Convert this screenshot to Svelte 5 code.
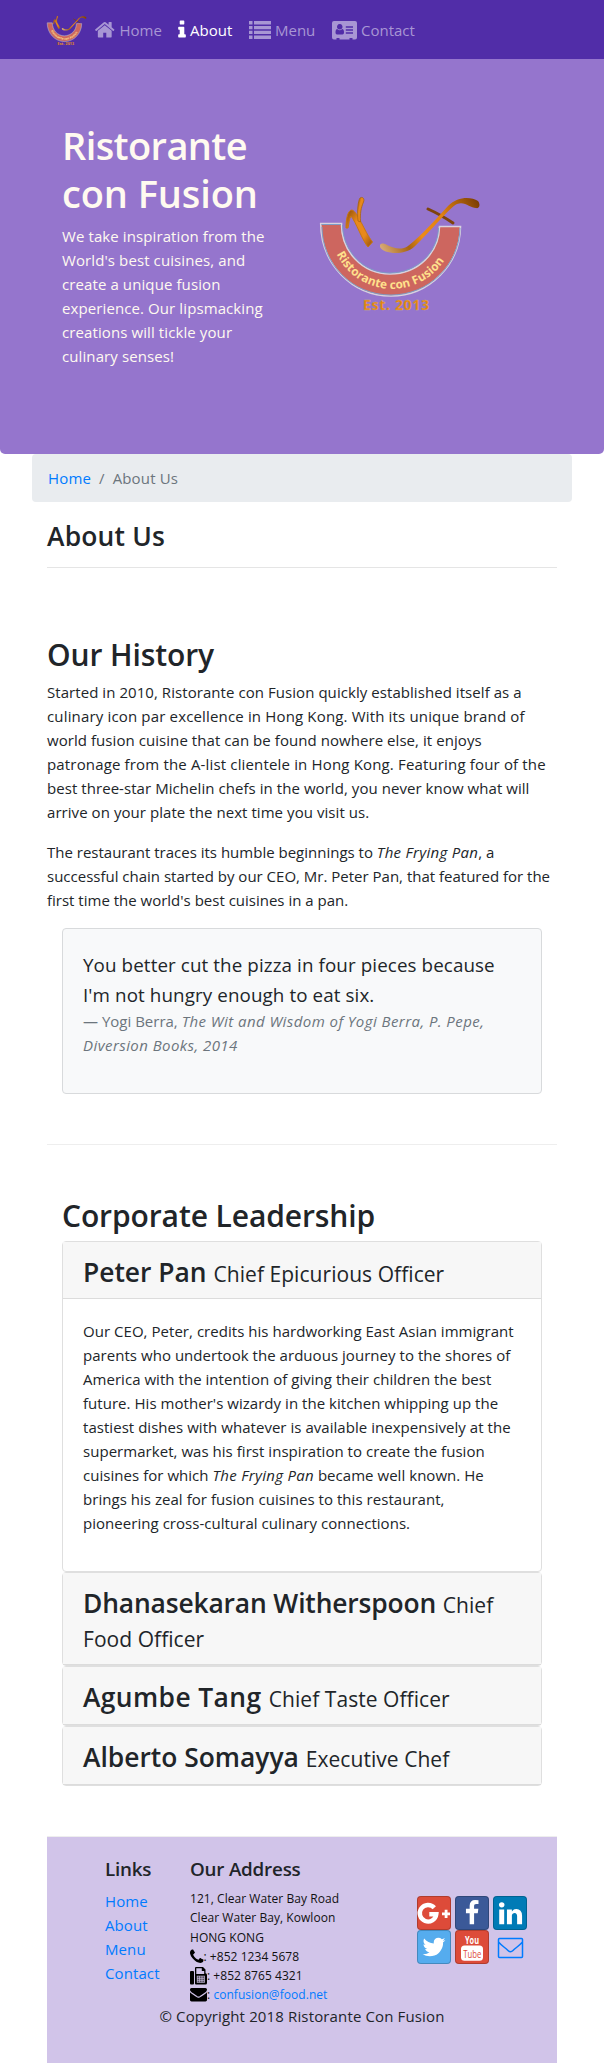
<script>
  const home = 'M1472 992v480q0 26-19 45t-45 19h-384v-384h-256v384h-384q-26 0-45-19t-19-45v-480q0-1 .5-3t.5-3l575-474 575 474q1 2 1 6zm223-69l-62 74q-8 9-21 11h-3q-13 0-21-7l-692-577-692 577q-12 8-24 7-13-2-21-11l-62-74q-8-10-7-23.5t11-21.5l719-599q32-26 76-26t76 26l244 204v-195q0-14 9-23t23-9h192q14 0 23 9t9 23v408l219 182q10 8 11 21.5t-7 23.5z';
  const info = 'M1216 1344v128q0 26-19 45t-45 19h-512q-26 0-45-19t-19-45v-128q0-26 19-45t45-19h64v-384h-64q-26 0-45-19t-19-45v-128q0-26 19-45t45-19h384q26 0 45 19t19 45v576h64q26 0 45 19t19 45zm-128-1152v192q0 26-19 45t-45 19h-256q-26 0-45-19t-19-45v-192q0-26 19-45t45-19h256q26 0 45 19t19 45z';
  const facebook = 'M1343 12v264h-157q-86 0-116 36t-30 108v189h293l-39 296h-254v759h-306v-759h-255v-296h255v-218q0-186 104-288.5t277-102.5q147 0 228 12z';
  const twitter = 'M1684 408q-67 98-162 167 1 14 1 42 0 130-38 259.5t-115.5 248.5-184.5 210.5-258 146-323 54.5q-271 0-496-145 35 4 78 4 225 0 401-138-105-2-188-64.5t-114-159.5q33 5 61 5 43 0 85-11-112-23-185.5-111.5t-73.5-205.5v-4q68 38 146 41-66-44-105-115t-39-154q0-88 44-163 121 149 294.5 238.5t371.5 99.5q-8-38-8-74 0-134 94.5-228.5t228.5-94.5q140 0 236 102 109-21 205-78-37 115-142 178 93-10 186-50z';
  const linkedin = 'M477 625v991h-330v-991h330zm21-306q1 73-50.5 122t-135.5 49h-2q-82 0-132-49t-50-122q0-74 51.5-122.5t134.5-48.5 133 48.5 51 122.5zm1166 729v568h-329v-530q0-105-40.5-164.5t-126.5-59.5q-63 0-105.5 34.5t-63.5 85.5q-11 30-11 81v553h-329q2-399 2-647t-1-296l-1-48h329v144h-2q20-32 41-56t56.5-52 87-43.5 114.5-15.5q171 0 275 113.5t104 332.5z';
  const phone = 'M1600 1240q0 27-10 70.5t-21 68.5q-21 50-122 106-94 51-186 51-27 0-53-3.5t-57.5-12.5-47-14.5-55.5-20.5-49-18q-98-35-175-83-127-79-264-216t-216-264q-48-77-83-175-3-9-18-49t-20.5-55.5-14.5-47-12.5-57.5-3.5-53q0-92 51-186 56-101 106-122 25-11 68.5-21t70.5-10q14 0 21 3 18 6 53 76 11 19 30 54t35 63.5 31 53.5q3 4 17.5 25t21.5 35.5 7 28.5q0 20-28.5 50t-62 55-62 53-28.5 46q0 9 5 22.5t8.5 20.5 14 24 11.5 19q76 137 174 235t235 174q2 1 19 11.5t24 14 20.5 8.5 22.5 5q18 0 46-28.5t53-62 55-62 50-28.5q14 0 28.5 7t35.5 21.5 25 17.5q25 15 53.5 31t63.5 35 54 30q70 35 76 53 3 7 3 21z';
  const mail = 'M1792 710v794q0 66-47 113t-113 47h-1472q-66 0-113-47t-47-113v-794q44 49 101 87 362 246 497 345 57 42 92.5 65.5t94.5 48 110 24.5h2q51 0 110-24.5t94.5-48 92.5-65.5q170-123 498-345 57-39 100-87zm0-294q0 79-49 151t-122 123q-376 261-468 325-10 7-42.5 31t-54 38.5-52 32.5-57.5 27-50 9h-2q-23 0-50-9t-57.5-27-52-32.5-54-38.5-42.5-31q-91-64-262-182.5t-205-142.5q-62-42-117-115.5t-55-136.5q0-78 41.5-130t118.5-52h1472q65 0 112.5 47t47.5 113z';
  const links = ['Home', 'About', 'Menu', 'Contact'];
</script>

{#snippet logo(id, w, h)}
  <svg width={w} height={h} viewBox="0 0 162 120" preserveAspectRatio="none">
    <defs>
      <linearGradient id="{id}-gold" x1="0" y1="0" x2="1" y2="1">
        <stop offset="0" stop-color="#8a4a08" /><stop offset=".35" stop-color="#e8891c" />
        <stop offset=".7" stop-color="#e8891c" /><stop offset="1" stop-color="#8f4c0c" />
      </linearGradient>
      <linearGradient id="{id}-tail" gradientUnits="userSpaceOnUse" x1="60" y1="55" x2="159" y2="5">
        <stop offset="0" stop-color="#dcb183" /><stop offset=".25" stop-color="#a8640f" />
        <stop offset=".4" stop-color="#ed8b16" /><stop offset=".65" stop-color="#e08112" />
        <stop offset=".85" stop-color="#a65c0a" /><stop offset="1" stop-color="#7b3d02" />
      </linearGradient>
      <path id="{id}-arc" d="M16.500 57A62 62 0 0 0 128 57" />
    </defs>
    <path d="M.7 26.500H21.500C21 54 42 77 70 77C98 77 119 56 119.500 29.500H140.500C140 68 109 99 71 99C32 99 1 67 .7 26.500Z" fill="#cd665f" stroke="#d8d2df" stroke-width="1.600" />
    <path d="M1.500 27.500H21M22.500 28C23 54 43 76 70 76C97 76 118 55 118.500 31M2 30C2 67 32 98 71 98C108 98 139 69 140 31" fill="none" stroke="#7d9cc6" stroke-width="1" />
    <path d="M26 31C26 21 28 13 32 13C38 15 44 34 52.500 45L48 50C42 43 36 25 31 19C29 22 29 27 28 31Z" fill="url(#{id}-gold)" stroke="#c9770f" stroke-width="1" />
    <path d="M38 24C37 14 38 4 40 1C42-.5 45 1 43.500 5C41 11 40 16 40.500 25Z" fill="url(#{id}-gold)" stroke="#a8640f" stroke-width=".8" />
    <path d="M108 12C117 16 127 22 133 26" fill="none" stroke="#7e430c" stroke-width="3" stroke-linecap="round" />
    <path d="M60 48C61 46 64 46 67 48C75 52 82 53 88 49C102 38 116 22 128 9C138-1 151-.5 158 4C161 8 159 12 156 11C150 11 145 4 137 7C130 10 111 34 94 50C84 59 63 57 60 50Z" fill="url(#{id}-tail)" />
    <text class="band"><textPath href="#{id}-arc" textLength="131">Ristorante con Fusion</textPath></text>
    <text class="est" x="43" y="112.500" textLength="66">Est. 2013</text>
  </svg>
{/snippet}

<nav>
  <div class="brand">{@render logo('small', 40, 31)}</div>
  <a class="nl n1" href="#home"><svg width="21.500" height="21.500" viewBox="0 0 1792 1792"><path d={home} /></svg><span>Home</span></a>
  <a class="nl n2 active" href="#about"><svg width="8" height="21.500" viewBox="560 0 670 1792"><path d={info} /></svg><span>About</span></a>
  <a class="nl n3" href="#menu"><svg width="22" height="20" viewBox="0 0 22 20"><path d="M0 1h3.500v3.500H0zM0 6h3.500v3.300H0zM0 10.800h3.500v3.300H0zM0 15.500h3.500V19H0zM5 1h17v3.500H5zM5 6h17v3.300H5zM5 10.800h17v3.300H5zM5 15.500h17V19H5z" /></svg><span>Menu</span></a>
  <a class="nl n4" href="#contact"><svg width="25" height="19" viewBox="0 0 25 19"><path fill-rule="evenodd" d="M2 0H23Q25 0 25 2V16.500Q25 18.500 23 18.500H20.500V17H17.500V18.500H7.500V17H4.500V18.500H2Q0 18.500 0 16.500V2Q0 0 2 0ZM5.200 8Q3.500 8.300 3.500 11.500Q3.500 13.500 5 13.500H10.500Q12 13.500 12 11.500Q12 8.300 10.300 8Q7.700 10.600 5.200 8ZM7.750 3A2.800 2.800 0 1 0 7.760 3ZM13.800 5.200H21V6.700H13.800ZM13.800 8.200H21V9.700H13.800ZM13.800 11.200H21V12.700H13.800Z" /></svg><span>Contact</span></a>
</nav>

<header>
  <div class="pitch">
    <h1><span>Ristorante</span><br />con Fusion</h1>
    <p>We take inspiration from the<br />World's best cuisines, and<br />create a unique fusion<br />experience. Our lipsmacking<br />creations will tickle your<br />culinary senses!</p>
  </div>
  {@render logo('large', 162, 120)}
</header>

<main>
  <ol class="crumbs"><li><a href="#home">Home</a></li><li class="sep">/</li><li class="muted">About Us</li></ol>
  <div class="inner">
    <h3 class="title">About Us</h3>
    <hr />
    <section>
      <h2>Our History</h2>
      <div class="body">
        <p class="first">Started in 2010, Ristorante con Fusion quickly established itself as a<br /><span>culinary icon par excellence in Hong Kong. With its unique brand of</span><br />world fusion cuisine that can be found nowhere else, it enjoys<br /><span>patronage from the A-list clientele in Hong Kong. Featuring four of the</span><br />best three-star Michelin chefs in the world, you never know what will<br />arrive on your plate the next time you visit us.</p>
        <p>The restaurant traces its humble beginnings to <em>The Frying Pan</em>, a<br />successful chain started by our CEO, Mr. Peter Pan, that featured for the<br />first time the world's best cuisines in a pan.</p>
      </div>
      <blockquote>
        <p>You better cut the pizza in four pieces because<br />I'm not hungry enough to eat six.</p>
        <footer>— Yogi Berra, <em>The Wit and Wisdom of Yogi Berra, P. Pepe,<br />Diversion Books, 2014</em></footer>
      </blockquote>
    </section>
    <section class="lead">
      <h2>Corporate Leadership</h2>
      <div class="card">
        <h3 class="open">Peter Pan <small>Chief Epicurious Officer</small></h3>
        <p>Our CEO, Peter, credits his hardworking East Asian immigrant<br />parents who undertook the arduous journey to the shores of<br />America with the intention of giving their children the best<br />future. His mother's wizardy in the kitchen whipping up the<br />tastiest dishes with whatever is available inexpensively at the<br />supermarket, was his first inspiration to create the fusion<br />cuisines for which <em>The Frying Pan</em> became well known. He<br />brings his zeal for fusion cuisines to this restaurant,<br />pioneering cross-cultural culinary connections.</p>
      </div>
      <div class="card"><h3 class="tight">Dhanasekaran Witherspoon <small>Chief<br />Food Officer</small></h3></div>
      <div class="card"><h3 class="wide">Agumbe Tang <small>Chief Taste Officer</small></h3></div>
      <div class="card"><h3>Alberto Somayya <small>Executive Chef</small></h3></div>
    </section>
    <div class="foot">
      <div class="cols">
        <div class="links">
          <h5>Links</h5>
          {#each links as l}<a href="#{l}">{l}</a>{/each}
        </div>
        <div class="addr">
          <h5>Our Address</h5>
          <address>
            <div>121, Clear Water Bay Road</div>
            <div>Clear Water Bay, Kowloon</div>
            <div>HONG KONG</div>
            <div class="ic"><svg width="13.500" height="13.500" viewBox="192 256 1408 1280"><path d={phone} /></svg><span>: +852 1234 5678</span></div>
            <div class="ic"><svg width="17" height="18" viewBox="0 0 17 18"><path d="M0 5Q0 4 1 4H3Q4 4 4 5V16.500Q4 17.500 3 17.500H1Q0 17.500 0 16.500Z" /><path fill-rule="evenodd" d="M5 1Q5 0 6 0H13L15.500 2.500V6.200Q17 6.500 17 8V16Q17 17.500 15.500 17.500H6Q5 17.500 5 16.500ZM6.300 1.300V7H14.200V4H11.800V1.300ZM6.800 8.700V15.700H14.800V8.700Z" /><path d="M7.500 9.300h1.800V11H7.500zM9.900 9.300h1.800V11H9.900zM12.300 9.300h1.800V11h-1.800zM7.500 11.500h1.800v1.700H7.500zM9.900 11.500h1.800v1.700H9.900zM12.300 11.500h1.800v1.700h-1.800zM7.500 13.700h1.800v1.500H7.500zM9.900 13.700h1.800v1.500H9.900zM12.300 13.700h1.800v1.500h-1.800z" opacity=".6" /></svg><span>: +852 8765 4321</span></div>
            <div class="ic"><svg width="17" height="13.500" viewBox="0 256 1792 1408" preserveAspectRatio="none"><path d={mail} /></svg><span>: <a href="#mail">confusion@food.net</a></span></div>
          </address>
        </div>
        <div class="social">
          <a class="btn red" href="#g"><svg width="34" height="34" viewBox="0 0 34 34"><path d="M17.300 11.800A8.300 8.300 0 1 0 19.300 18.300H12.300" fill="none" stroke="#fff" stroke-width="4.400" /><path d="M25 16.500h2.700v-2.800h2.800v2.800h2.500v2.700h-2.500v2.900h-2.800v-2.900H25z" fill="#fff" /></svg></a>
          <a class="btn fb" href="#f"><svg width="26" height="26" viewBox="0 0 1792 1792"><path d={facebook} fill="#fff" /></svg></a>
          <a class="btn in" href="#in"><svg width="27" height="27" viewBox="0 0 1792 1792"><path d={linkedin} fill="#fff" /></svg></a>
          <a class="btn tw" href="#tw"><svg width="26" height="26" viewBox="0 0 1792 1792"><path d={twitter} fill="#fff" /></svg></a>
          <a class="btn red" href="#yt"><svg width="34" height="34" viewBox="0 0 34 34"><text class="yt" x="10" y="13.500" textLength="14" lengthAdjust="spacingAndGlyphs">You</text><rect x="6" y="15.500" width="22" height="15.200" rx="3.500" fill="#fff" /><text class="yt tube" x="8.300" y="27.700" textLength="18" lengthAdjust="spacingAndGlyphs">Tube</text></svg></a>
          <a class="btn plain" href="#mail"><svg width="34" height="34" viewBox="0 0 34 34"><path d="M6.500 8.500H28.500Q29.500 8.500 29.500 9.500V26.500Q29.500 27.500 28.500 27.500H6.500Q5.500 27.500 5.500 26.500V9.500Q5.500 8.500 6.500 8.500ZM5.500 12C9 16 12 17.500 15 20.500Q17.500 23 20 20.500C23 17.500 26 16 29.500 12" fill="none" stroke="#007bff" stroke-width="1.500" /></svg></a>
        </div>
      </div>
      <p class="copy">© Copyright 2018 Ristorante Con Fusion</p>
    </div>
  </div>
</main>

<style>
  :global(body) { margin: 0; background: #fff; }
  :global(#app) { font: 15px/24px "Open Sans", "Noto Sans", sans-serif; color: #212529; white-space: nowrap; }
  a { color: #007bff; text-decoration: none; }
  h1, h2, h3, h5, p, ol, blockquote { margin: 0; padding: 0; font-weight: 600; }
  p, ol, blockquote { font-weight: 400; }
  em { letter-spacing: .3px; }
  svg { display: block; flex: none; overflow: visible; }
  nav { height: 59px; background: #512da8; display: flex; align-items: center; box-sizing: border-box; padding: 0 0 0 47px; }
  .brand { width: 47px; padding-top: 4px; }
  .nl { display: flex; align-items: center; gap: 4px; color: #a896d4; fill: currentColor; padding-top: 1px; }
  .active { color: #fff; }
  .n1 { width: 84px; }
  .n2 { width: 71px; }
  .n3 { width: 83px; }
  .band { font: 700 11.800px "Open Sans", sans-serif; fill: #ffe08c; }
  .est { font: 700 14px "Open Sans", sans-serif; fill: #e8820c; stroke: #c9b27a; stroke-width: .3; }
  header { height: 395px; box-sizing: border-box; background: #9575cd; border-radius: 0 0 5px 5px; padding: 61px 0 0 62px; display: flex; color: floralwhite; }
  .pitch { width: 258px; }
  .pitch p { letter-spacing: .1px; }
  header > :global(svg) { margin-top: 77px; }
  h1 { font-size: 38px; line-height: 48px; padding-top: 1px; margin-bottom: 7px; letter-spacing: -.1px; }
  h1 span { letter-spacing: -.6px; }
  main { width: 540px; margin: 0 auto; }
  .crumbs { display: flex; list-style: none; background: #e9ecef; border-radius: 4px; padding: 12px 16px; gap: 8px; letter-spacing: .15px; }
  .muted, .sep { color: #6c757d; }
  .inner { padding: 16px 15px 0; }
  h3 { font-size: 26.400px; line-height: 33.600px; }
  .title { padding-top: 2px; letter-spacing: .2px; }
  hr { margin: 13px 0 0; border: 0; border-top: 1px solid #e5e5e5; }
  hr + section { padding-top: 66px; }
  section { padding: 50px 0; border-bottom: 1px solid #eee; }
  h2 { font-size: 30px; line-height: 38.400px; padding-top: 2px; margin-bottom: 6px; letter-spacing: -.1px; }
  .body p { margin-bottom: 16px; }
  .body .first { letter-spacing: .06px; }
  .first span { letter-spacing: .16px; }
  blockquote { margin: 0 15px; border: 1px solid #d8dadc; border-radius: 4px; background: #f8f9fa; padding: 20px 20px 36px; }
  blockquote p { font-size: 18.800px; line-height: 30px; padding-top: 1px; margin-bottom: -1px; letter-spacing: .1px; }
  blockquote footer { color: #6c757d; }
  blockquote em { letter-spacing: .43px; }
  .lead { padding: 50px 15px; }
  .card { border: 1px solid #dfdfdf; border-radius: 4px; }
  .card h3 { background: #f7f7f7; padding: 14px 20px 9.500px; border-bottom: 1px solid #dcdcdc; }
  .card .open { padding-bottom: 8.300px; }
  .card p { padding: 20px 20px 36px; letter-spacing: .04px; }
  .card .tight { letter-spacing: -.15px; }
  .card .wide { letter-spacing: .4px; }
  small { font-size: 21px; font-weight: 400; line-height: 20px; letter-spacing: .05px; }
  .foot { background: #d1c4e9; height: 228.500px; box-sizing: border-box; padding-top: 20px; }
  .cols { display: flex; height: 147px; padding-left: 58px; }
  .links { display: flex; flex-direction: column; width: 85px; letter-spacing: .1px; }
  h5 { font-size: 18.800px; line-height: 24px; margin-bottom: 8px; letter-spacing: -.2px; }
  .addr { width: 227px; }
  address { font-style: normal; font-size: 12px; line-height: 19.200px; color: #111; letter-spacing: .05px; }
  .ic { display: flex; align-items: center; height: 19.200px; }
  .social { display: grid; grid-template-columns: repeat(3, 34px); grid-auto-rows: 34px; column-gap: 4px; padding-top: 39px; }
  .btn { display: flex; align-items: center; justify-content: center; border-radius: 4px; box-shadow: inset 0 0 0 1px rgba(0, 0, 0, .2); }
  .red { background: #dd4b39; }
  .fb { background: #3b5998; }
  .in { background: #007bb6; }
  .tw { background: #55acee; }
  .plain { box-shadow: none; }
  .yt { font: 700 11px "Open Sans", sans-serif; fill: #fff; }
  .tube { fill: #dd4b39; font-weight: 400; }
  .copy { text-align: center; letter-spacing: .14px; }
</style>
